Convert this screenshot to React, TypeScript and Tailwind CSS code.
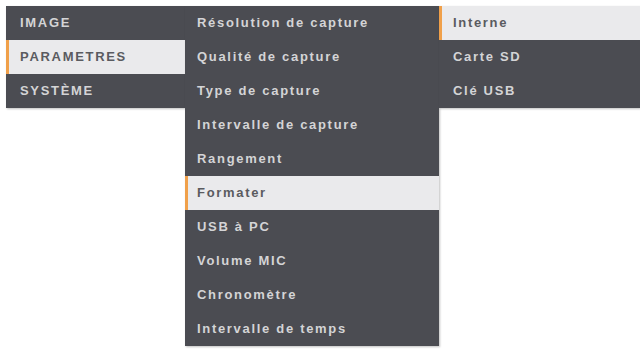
const col1 = ["IMAGE", "PARAMETRES", "SYSTÈME"];
const col2 = [
  "Résolution de capture",
  "Qualité de capture",
  "Type de capture",
  "Intervalle de capture",
  "Rangement",
  "Formater",
  "USB à PC",
  "Volume MIC",
  "Chronomètre",
  "Intervalle de temps",
];
const col3 = ["Interne", "Carte SD", "Clé USB"];

function Menu({ items, active, width, pad }: { items: string[]; active: number; width: string; pad: string }) {
  return (
    <div className={`${width} bg-[#4b4c52] shadow-[1px_1px_2px_rgba(0,0,0,0.25)]`}>
      {items.map((label, i) => {
        const on = i === active;
        return (
          <div
            key={label}
            className={`h-[34px] flex items-center ${pad} border-l-[3px] ${
              on ? "bg-[#eaeaec] text-[#5a5b60] border-[#f0a04a]" : "text-[#d4d4d6] border-transparent"
            }`}
          >
            <span className="text-[13px] font-bold tracking-[0.13em]">{label}</span>
          </div>
        );
      })}
    </div>
  );
}

export default function App() {
  return (
    <div className="w-[640px] h-[351px] bg-white overflow-hidden pt-[6px] pl-[6px] flex items-start font-['Liberation_Sans',Arial,sans-serif]">
      <Menu items={col1} active={1} width="w-[179px]" pad="pl-[11px]" />
      <Menu items={col2} active={5} width="w-[254px]" pad="pl-[9px]" />
      <Menu items={col3} active={0} width="w-[201px]" pad="pl-[11px]" />
    </div>
  );
}
